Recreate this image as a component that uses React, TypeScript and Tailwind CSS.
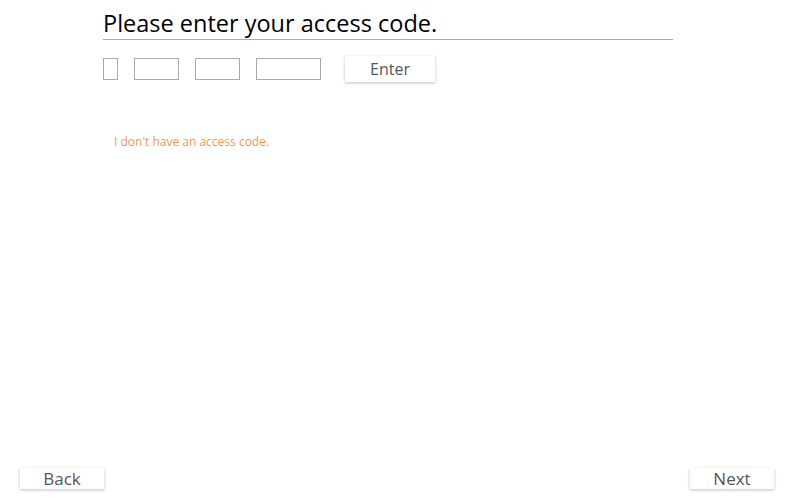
export default function App() {
  return (
    <div className="w-[800px] h-[500px] bg-white flex flex-col font-['Open_Sans',sans-serif] text-[#222]">
      <div className="pl-[103px] pt-[8px]">
        <h1 className="w-[570px] border-b border-[#aaa] text-[23.5px] leading-[31px] text-black">
          Please enter your access code.
        </h1>
        <div className="flex items-center mt-[16px] h-[26px]">
          <input className="w-[15px] h-[22px] border border-[#aaa] outline-none" />
          <input className="w-[45px] h-[22px] border border-[#aaa] ml-[16px] outline-none" />
          <input className="w-[45px] h-[22px] border border-[#aaa] ml-[16px] outline-none" />
          <input className="w-[65px] h-[22px] border border-[#aaa] ml-[16px] outline-none" />
          <button className="ml-[24px] w-[90px] h-[26px] bg-white text-[#555] text-[16px] shadow-[0_1px_3px_rgba(0,0,0,0.25)]">
            Enter
          </button>
        </div>
        <a className="block mt-[51px] ml-[11px] text-[12px] leading-[18px] text-[#f0984e] cursor-pointer">
          I don't have an access code.
        </a>
      </div>
      <div className="mt-auto flex justify-between pl-[20px] pr-[26px] pb-[11px]">
        <button className="w-[84px] h-[21px] bg-white text-[#555] text-[17px] leading-[21px] shadow-[0_1px_3px_rgba(0,0,0,0.25)]">
          Back
        </button>
        <button className="w-[84px] h-[21px] bg-white text-[#555] text-[17px] leading-[21px] shadow-[0_1px_3px_rgba(0,0,0,0.25)]">
          Next
        </button>
      </div>
    </div>
  );
}
